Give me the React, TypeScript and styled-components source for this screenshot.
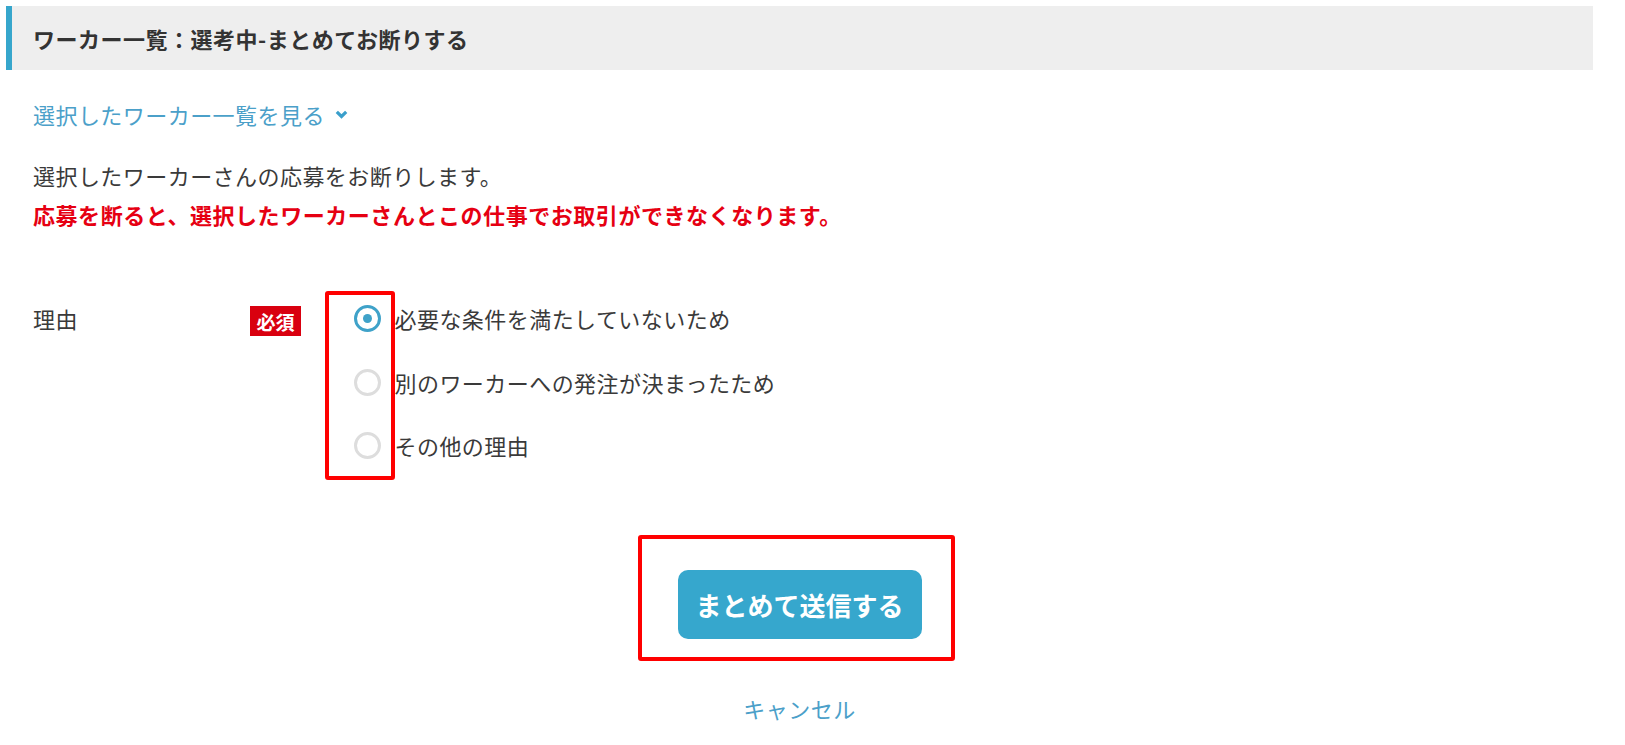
import { useState } from "react";
import { styled, createGlobalStyle } from "styled-components";

const GlobalStyle = createGlobalStyle`
  body {
    margin: 0;
    background: #fff;
    font-family: "Noto Sans CJK JP", "Noto Sans", sans-serif;
    color: #3a3a3a;
    letter-spacing: 0.45px;
  }
  * {
    box-sizing: border-box;
  }
`;

const Page = styled.div`
  width: 1599px;
  padding: 6px 6px 0 6px;
`;

const Header = styled.div`
  height: 64px;
  background: #eeeeee;
  border-left: 6px solid #36a6cc;
  display: flex;
  align-items: center;
  padding-left: 21px;
`;

const Title = styled.h1`
  margin: 0;
  font-size: 22px;
  font-weight: 700;
  line-height: 32px;
  letter-spacing: 0.5px;
  color: #333;
`;

const ToggleLink = styled.a`
  display: inline-flex;
  align-items: center;
  gap: 10px;
  margin: 28px 0 0 27px;
  font-size: 22px;
  line-height: 32px;
  color: #4ba0c9;
  cursor: pointer;
`;

const Notice = styled.div`
  margin: 26px 0 0 27px;
  font-size: 22px;
  line-height: 39px;
`;

const Warning = styled.p`
  margin: 0;
  font-weight: 700;
  color: #e60012;
  letter-spacing: 0.55px;
`;

const Plain = styled.p`
  margin: 0;
`;

const FormRow = styled.div`
  display: grid;
  grid-template-columns: 217px 51px 1fr;
  align-items: start;
  margin: 71px 0 0 27px;
`;

const FieldLabel = styled.div`
  font-size: 22px;
  line-height: 27px;
`;

const Required = styled.span`
  display: inline-flex;
  align-items: center;
  justify-content: center;
  width: 51px;
  height: 30px;
  margin-top: 1px;
  background: #d9000f;
  color: #fff;
  font-size: 19px;
  font-weight: 700;
  letter-spacing: 0;
  line-height: 1;
`;

const Options = styled.div`
  position: relative;
  display: flex;
  flex-direction: column;
  gap: 36.5px;
  margin-left: 52.5px;
`;

const Highlight = styled.div<{ $top: number; $left: number; $right: number; $bottom: number }>`
  position: absolute;
  top: ${(p) => p.$top}px;
  left: ${(p) => p.$left}px;
  right: ${(p) => p.$right}px;
  bottom: ${(p) => p.$bottom}px;
  border: 4px solid #ff0000;
  border-radius: 3px;
  pointer-events: none;
`;

const OptionHighlight = styled(Highlight)`
  right: auto;
  width: 70px;
`;

const Option = styled.label`
  display: flex;
  align-items: center;
  gap: 14px;
  height: 27px;
  font-size: 22px;
  line-height: 27px;
  cursor: pointer;
`;

const Radio = styled.span<{ $checked: boolean }>`
  flex: none;
  width: 27px;
  height: 27px;
  border-radius: 50%;
  border: 3px solid ${(p) => (p.$checked ? "#3fa2c9" : "#dddddd")};
  display: flex;
  align-items: center;
  justify-content: center;
  &::after {
    content: "";
    width: 9px;
    height: 9px;
    border-radius: 50%;
    background: #3fa2c9;
    display: ${(p) => (p.$checked ? "block" : "none")};
  }
`;

const Actions = styled.div`
  display: flex;
  flex-direction: column;
  align-items: center;
  margin-top: 110.5px;
`;

const SubmitWrap = styled.div`
  position: relative;
`;

const SubmitButton = styled.button`
  width: 244px;
  height: 69px;
  border: none;
  border-radius: 10px;
  background: #36a7cd;
  color: #fff;
  font-family: inherit;
  font-size: 26px;
  font-weight: 700;
  letter-spacing: 0;
  cursor: pointer;
`;

const CancelLink = styled.a`
  margin-top: 53px;
  font-size: 22px;
  line-height: 32px;
  color: #4ba0c9;
  cursor: pointer;
`;

const reasons = [
  "必要な条件を満たしていないため",
  "別のワーカーへの発注が決まったため",
  "その他の理由",
];

const App = () => {
  const [selected, setSelected] = useState(0);

  return (
    <Page>
      <GlobalStyle />
      <Header>
        <Title>ワーカー一覧：選考中-まとめてお断りする</Title>
      </Header>
      <ToggleLink>
        選択したワーカー一覧を見る
        <svg width="13" height="9" viewBox="0 0 13 9">
          <polyline
            points="1.8,1.8 6.5,6.5 11.2,1.8"
            fill="none"
            stroke="#3a9fcb"
            strokeWidth="3.2"
          />
        </svg>
      </ToggleLink>
      <Notice>
        <Plain>選択したワーカーさんの応募をお断りします。</Plain>
        <Warning>
          応募を断ると、選択したワーカーさんとこの仕事でお取引ができなくなります。
        </Warning>
      </Notice>
      <FormRow>
        <FieldLabel>理由</FieldLabel>
        <Required>必須</Required>
        <Options>
          {reasons.map((r, i) => (
            <Option key={r} onClick={() => setSelected(i)}>
              <Radio $checked={selected === i} />
              {r}
            </Option>
          ))}
          <OptionHighlight $top={-14.5} $left={-28.5} $right={0} $bottom={-20.5} />
        </Options>
      </FormRow>
      <Actions>
        <SubmitWrap>
          <SubmitButton>まとめて送信する</SubmitButton>
          <Highlight $top={-35} $left={-40} $right={-33} $bottom={-22} />
        </SubmitWrap>
        <CancelLink>キャンセル</CancelLink>
      </Actions>
    </Page>
  );
};

export default App;
